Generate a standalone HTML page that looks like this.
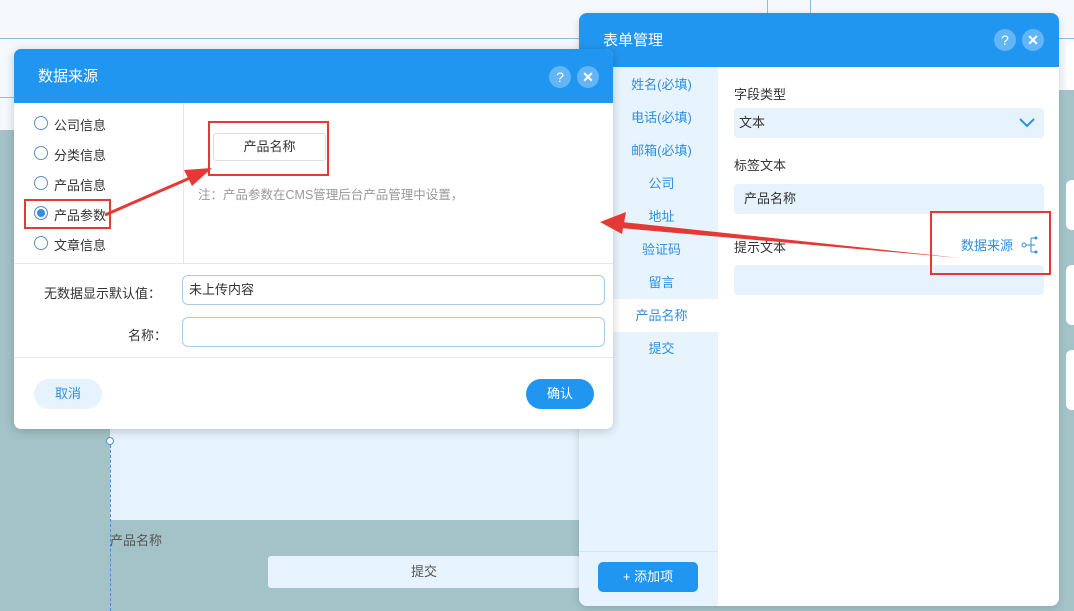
<!DOCTYPE html>
<html><head><meta charset="utf-8"><style>
*{box-sizing:border-box;margin:0;padding:0}
body{width:1074px;height:611px;position:relative;overflow:hidden;background:#a3c3c8;font-family:"Liberation Sans","Noto Sans CJK SC",sans-serif;font-size:13px;color:#333}
.a{position:absolute}
.hdr{background:#2196f0;color:#fff;font-size:15px}
.ic{position:absolute;width:22px;height:22px;border-radius:50%;background:#64b5f6;color:#fff;text-align:center;line-height:22px;font-size:14px}
.nav div{height:33px;line-height:33px;text-align:center;color:#2f8fe0;font-size:13px;padding-left:26px}
.rb{position:absolute;left:20px;width:14px;height:14px;border:1px solid #5a8fc6;border-radius:50%;background:#fff}
.lbl{position:absolute;left:40px;font-size:13px}
</style></head><body>
<div class="a" style="left:0;top:0;width:1074px;height:130px;background:#f5f9fd"></div>
<div class="a" style="left:0;top:38px;width:1074px;height:1px;background:#8fbce6"></div>
<div class="a" style="left:767px;top:0;width:1px;height:38px;background:#8fbce6"></div>
<div class="a" style="left:810px;top:0;width:1px;height:38px;background:#8fbce6"></div>
<div class="a" style="left:0;top:97px;width:580px;height:1px;background:#8fbce6"></div>
<div class="a" style="left:1059px;top:90px;width:15px;height:40px;background:#a3c3c8"></div>
<div class="a" style="left:110px;top:100px;width:470px;height:420px;background:#e6f2fc"></div>
<div class="a" style="left:110px;top:440px;width:0;height:171px;border-left:1px dashed #4a90d9"></div>
<div class="a" style="left:106px;top:437px;width:8px;height:8px;border:1px solid #4a90d9;border-radius:50%;background:#fff"></div>
<div class="a" style="left:110px;top:530px;color:#555">产品名称</div>
<div class="a" style="left:268px;top:556px;width:312px;height:32px;background:#e6f2fc;border-radius:3px;text-align:center;line-height:32px;color:#555">提交</div>
<div class="a" style="left:1066px;top:40px;width:20px;height:50px;background:#fff;border-radius:6px"></div>
<div class="a" style="left:1066px;top:180px;width:20px;height:50px;background:#fff;border-radius:6px"></div>
<div class="a" style="left:1066px;top:265px;width:20px;height:60px;background:#fff;border-radius:6px"></div>
<div class="a" style="left:1066px;top:350px;width:20px;height:60px;background:#fff;border-radius:6px"></div>

<!-- right panel -->
<div class="a" style="left:579px;top:13px;width:480px;height:593px;background:#fff;border-radius:8px;overflow:hidden;box-shadow:0 2px 8px rgba(0,0,0,.15)">
 <div class="hdr a" style="left:0;top:0;width:480px;height:54px;line-height:56px;padding-left:24px">表单管理</div>
 <div class="ic" style="left:415px;top:16px">?</div>
 <div class="ic" style="left:443px;top:16px;font-weight:bold">✕</div>
 <div class="a nav" style="left:0;top:54px;width:139px;height:539px;background:#e8f4fd;padding-top:1px">
  <div>姓名(必填)</div><div>电话(必填)</div><div>邮箱(必填)</div><div>公司</div><div>地址</div><div>验证码</div><div>留言</div><div style="background:#fff">产品名称</div><div>提交</div>
 </div>
 <div class="a" style="left:0;top:538px;width:139px;height:1px;background:#d5e8f5"></div>
 <div class="a" style="left:19px;top:549px;width:100px;height:30px;background:#2196f0;color:#fff;border-radius:5px;text-align:center;line-height:30px">+ 添加项</div>
 <div class="a" style="left:155px;top:71px">字段类型</div>
 <div class="a" style="left:155px;top:95px;width:310px;height:30px;background:#e6f2fc;border-radius:4px;padding-left:5px;line-height:30px">文本<svg class="a" style="right:8px;top:9px" width="18" height="12" viewBox="0 0 18 12"><path d="M2 2l7 7 7-7" fill="none" stroke="#2f8fe0" stroke-width="2"/></svg></div>
 <div class="a" style="left:155px;top:142px">标签文本</div>
 <div class="a" style="left:155px;top:171px;width:310px;height:30px;background:#e6f2fc;border-radius:4px;padding-left:10px;line-height:30px">产品名称</div>
 <div class="a" style="left:155px;top:224px">提示文本</div>
 <div class="a" style="left:382px;top:222px;color:#2f8fe0">数据来源</div>
 <svg class="a" style="left:442px;top:222px" width="18" height="20" viewBox="0 0 18 20"><circle cx="3" cy="10" r="2" fill="none" stroke="#2f8fe0"/><path d="M5 10h5M10 3v14M10 3h4M10 10h4M10 17h4" stroke="#2f8fe0" fill="none"/><circle cx="15" cy="3" r="1.5" fill="#2f8fe0"/><circle cx="15" cy="17" r="1.5" fill="#2f8fe0"/></svg>
 <div class="a" style="left:155px;top:252px;width:310px;height:30px;background:#e6f2fc;border-radius:4px"></div>
</div>

<!-- dialog -->
<div class="a" style="left:14px;top:49px;width:599px;height:380px;background:#fff;border-radius:7px;overflow:hidden;box-shadow:0 2px 10px rgba(0,0,0,.2)">
 <div class="hdr a" style="left:0;top:0;width:599px;height:54px;line-height:56px;padding-left:24px">数据来源</div>
 <div class="ic" style="left:535px;top:17px">?</div>
 <div class="ic" style="left:563px;top:17px;font-weight:bold">✕</div>
 <div class="a" style="left:169px;top:54px;width:1px;height:160px;background:#e3e8ee"></div>
 <div class="rb" style="top:67px"></div><div class="lbl" style="top:66px">公司信息</div>
 <div class="rb" style="top:97px"></div><div class="lbl" style="top:96px">分类信息</div>
 <div class="rb" style="top:127px"></div><div class="lbl" style="top:126px">产品信息</div>
 <div class="rb" style="top:157px;background:#2f8fe0;box-shadow:inset 0 0 0 2px #fff"></div><div class="lbl" style="top:156px">产品参数</div>
 <div class="rb" style="top:187px"></div><div class="lbl" style="top:186px">文章信息</div>
 <div class="a" style="left:199px;top:84px;width:113px;height:28px;border:1px solid #ddd;border-radius:3px;text-align:center;line-height:26px">产品名称</div>
 <div class="a" style="left:184px;top:135px;color:#999;font-size:12.5px">注：产品参数在CMS管理后台产品管理中设置，</div>
 <div class="a" style="left:0;top:214px;width:599px;height:1px;background:#e3e8ee"></div>
 <div class="a" style="left:30px;top:234px">无数据显示默认值：</div>
 <div class="a" style="left:168px;top:226px;width:423px;height:30px;border:1px solid #a9cbe8;border-radius:6px;padding-left:6px;line-height:28px">未上传内容</div>
 <div class="a" style="left:114px;top:276px">名称：</div>
 <div class="a" style="left:168px;top:268px;width:423px;height:30px;border:1px solid #a9cbe8;border-radius:6px"></div>
 <div class="a" style="left:0;top:308px;width:599px;height:1px;background:#e3e8ee"></div>
 <div class="a" style="left:20px;top:330px;width:68px;height:30px;background:#e6f2fc;color:#2f8fe0;border-radius:15px;text-align:center;line-height:30px">取消</div>
 <div class="a" style="left:512px;top:330px;width:68px;height:30px;background:#2196f0;color:#fff;border-radius:15px;text-align:center;line-height:30px">确认</div>
</div>

<!-- red annotations -->
<div class="a" style="left:24px;top:199px;width:87px;height:30px;border:2px solid #e53935"></div>
<div class="a" style="left:208px;top:121px;width:121px;height:55px;border:2px solid #e53935"></div>
<div class="a" style="left:930px;top:211px;width:121px;height:64px;border:2px solid #e53935"></div>
<svg class="a" style="left:0;top:0" width="1074" height="611">
 <line x1="105" y1="215" x2="190" y2="178" stroke="#e53935" stroke-width="3"/>
 <polygon points="212,168 184,170 192,186" fill="#e53935"/>
 <polygon points="960,258 620,228 622,222" fill="#e53935"/>
 <polygon points="600,222 626,212 622,234" fill="#e53935"/>
</svg>
</body></html>
